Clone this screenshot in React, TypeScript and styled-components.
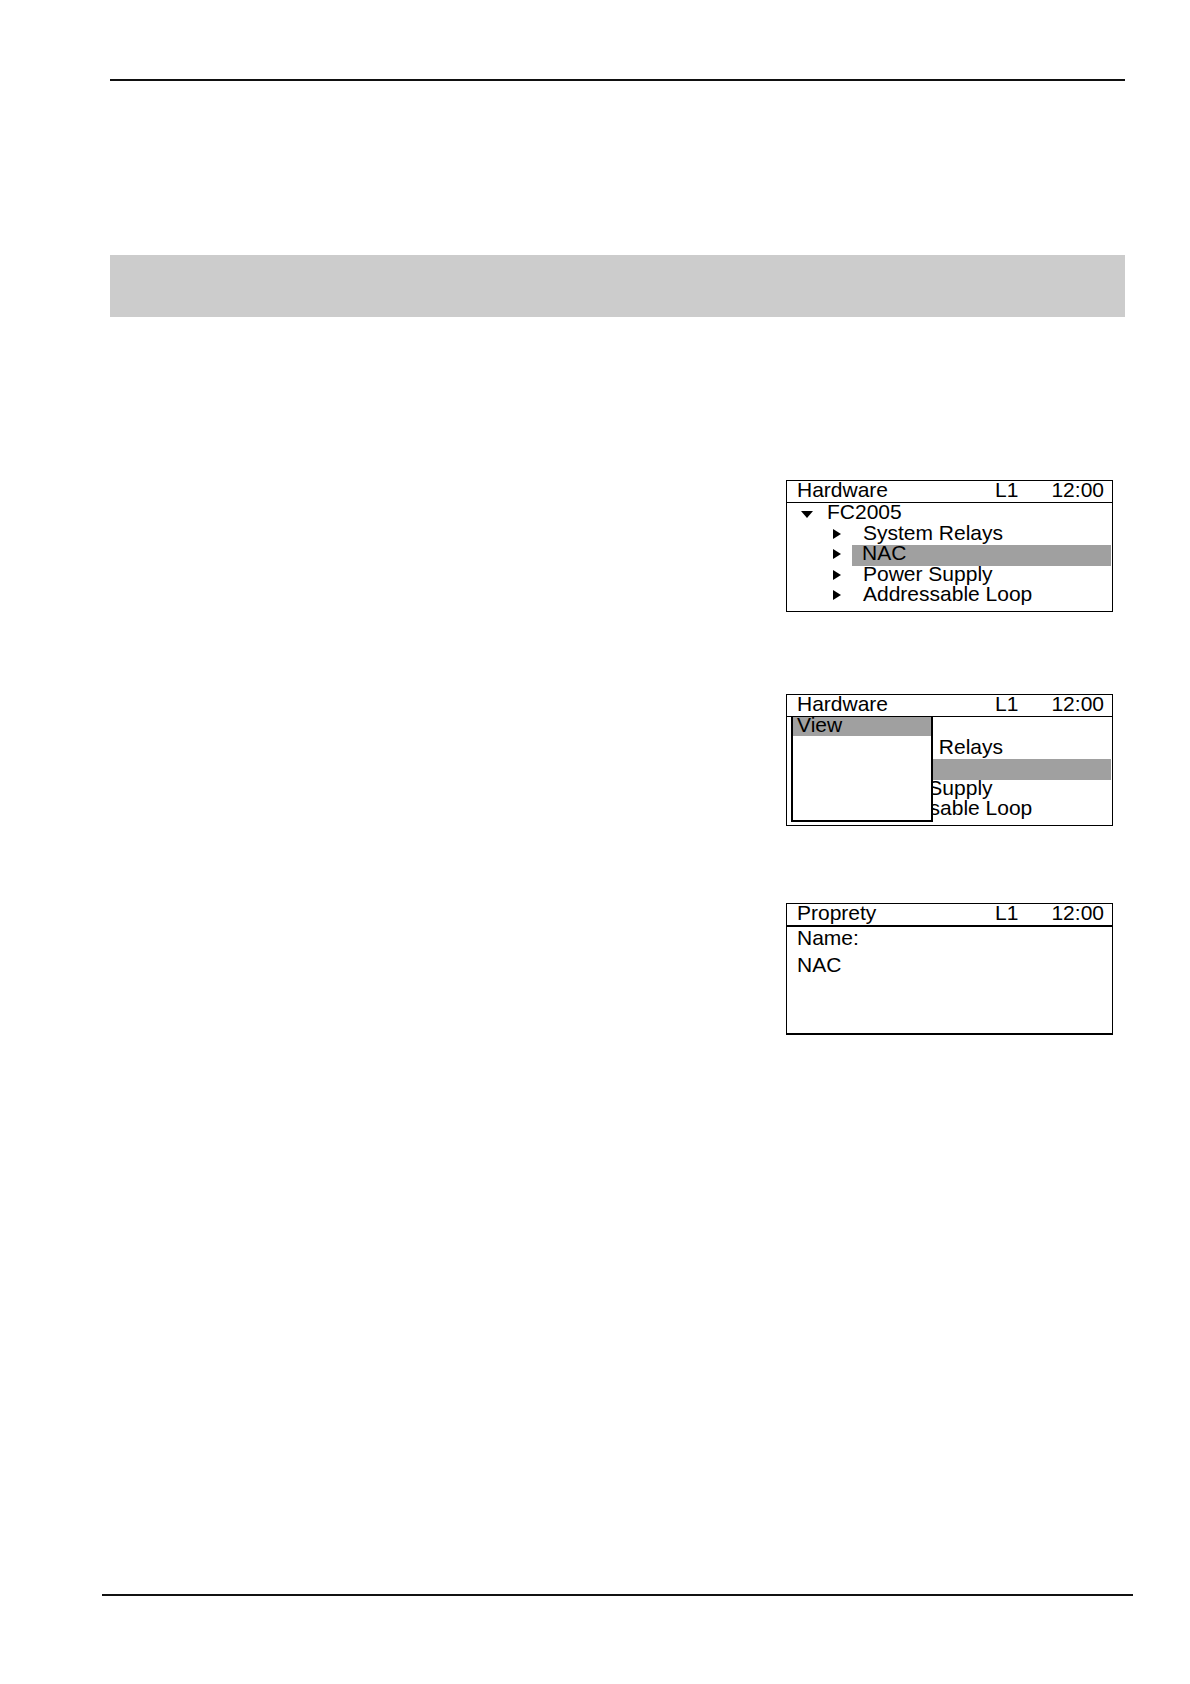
import styled, { createGlobalStyle } from 'styled-components';

// Panel geometry (px)
const SCREEN_WIDTH = 327;
const SCREEN_HEIGHT = 132;
const HIGHLIGHT = '#a0a0a0';

const GlobalStyle = createGlobalStyle`
  html, body {
    margin: 0;
    padding: 0;
    background: #fff;
  }
  body {
    font-family: "Liberation Sans", Arial, sans-serif;
    color: #000;
  }
`;

const Page = styled.div`
  width: 1190px;
  min-height: 1684px;
  display: flex;
  flex-direction: column;
  background: #fff;
`;

const Rule = styled.div<{ $top: number; $left: number; $width: number }>`
  flex: none;
  margin-top: ${p => p.$top}px;
  margin-left: ${p => p.$left}px;
  width: ${p => p.$width}px;
  height: 2px;
  background: #111;
`;

const Banner = styled.div`
  flex: none;
  margin-top: 174px;
  margin-left: 110px;
  width: 1015px;
  height: 62px;
  background: #cccccc;
`;

const ScreenStack = styled.div`
  display: flex;
  flex-direction: column;
  margin-top: 163px;
  margin-left: 786px;
`;

const Screen = styled.div<{ $before: number; $base?: number }>`
  position: relative;
  box-sizing: border-box;
  margin-top: ${p => p.$before}px;
  width: ${SCREEN_WIDTH}px;
  height: ${SCREEN_HEIGHT}px;
  border: 1px solid #000;
  border-bottom-width: ${p => p.$base ?? 1}px;
  font-size: 21px;
  background: #fff;
`;

const ScreenHeader = styled.div<{ $rule: number }>`
  display: flex;
  align-items: flex-start;
  height: 21px;
  padding: 0 8px 0 10px;
  border-bottom: ${p => p.$rule}px solid #000;
  line-height: 18px;
  white-space: nowrap;
`;

const HeaderTitle = styled.span`
  flex: 1;
`;

const HeaderLevel = styled.span`
  margin-right: 33px;
`;

const HeaderClock = styled.span``;

const TreeList = styled.div`
  padding-top: 1px;
`;

const TreeRow = styled.div<{ $indent: number; $hidden?: boolean }>`
  display: flex;
  align-items: flex-start;
  height: 20.5px;
  padding-left: ${p => p.$indent}px;
  line-height: 16px;
  white-space: nowrap;
  visibility: ${p => (p.$hidden ? 'hidden' : 'visible')};
`;

const Caret = styled.span<{ $open: boolean }>`
  flex: none;
  width: 0;
  height: 0;
  ${p =>
    p.$open
      ? `
    margin-top: 7px;
    margin-left: -1px;
    border-top: 7px solid #000;
    border-left: 6.5px solid transparent;
    border-right: 6.5px solid transparent;
  `
      : `
    margin-top: 4px;
    border-left: 8px solid #000;
    border-top: 5.5px solid transparent;
    border-bottom: 5.5px solid transparent;
  `}
`;

const TreeLabel = styled.span<{ $gap: number; $pad: number; $selected?: boolean }>`
  flex: 1;
  align-self: stretch;
  margin-left: ${p => p.$gap}px;
  margin-right: 1px;
  padding-left: ${p => p.$pad}px;
  background: ${p => (p.$selected ? HIGHLIGHT : 'transparent')};
`;

const PopupMenu = styled.div`
  position: absolute;
  top: 21px;
  left: 4px;
  box-sizing: border-box;
  width: 142px;
  height: 106px;
  border: 2px solid #000;
  border-top-width: 1px;
  background: #fff;
`;

const MenuItem = styled.div<{ $selected?: boolean }>`
  height: 19px;
  padding-left: 4px;
  line-height: 15px;
  background: ${p => (p.$selected ? HIGHLIGHT : 'transparent')};
`;

const FieldList = styled.div`
  padding-left: 10px;
`;

const FieldLine = styled.div`
  height: 27px;
  line-height: 22px;
`;

type TreeItem = { label: string; depth: 0 | 1; open?: boolean; selected?: boolean };

const TREE: TreeItem[] = [
  { label: 'FC2005', depth: 0, open: true },
  { label: 'System Relays', depth: 1 },
  { label: 'NAC', depth: 1, selected: true },
  { label: 'Power Supply', depth: 1 },
  { label: 'Addressable Loop', depth: 1 },
];

const Header = ({ title, rule = 1 }: { title: string; rule?: number }) => (
  <ScreenHeader $rule={rule}>
    <HeaderTitle>{title}</HeaderTitle>
    <HeaderLevel>L1</HeaderLevel>
    <HeaderClock>12:00</HeaderClock>
  </ScreenHeader>
);

// `covered` hides the root row, which sits entirely under the popup menu
const HardwareTree = ({ covered = false }: { covered?: boolean }) => (
  <TreeList>
    {TREE.map(item =>
      item.depth === 0 ? (
        <TreeRow key={item.label} $indent={15} $hidden={covered}>
          <Caret $open />
          <TreeLabel $gap={14} $pad={0}>{item.label}</TreeLabel>
        </TreeRow>
      ) : (
        <TreeRow key={item.label} $indent={46}>
          <Caret $open={false} />
          <TreeLabel $gap={11} $pad={item.selected ? 10 : 11} $selected={item.selected}>
            {item.label}
          </TreeLabel>
        </TreeRow>
      )
    )}
  </TreeList>
);

const App = () => {
  return (
    <>
      <GlobalStyle />
      <Page>
        <Rule $top={79} $left={110} $width={1015} />
        <Banner />

        <ScreenStack>
          <Screen $before={0}>
            <Header title="Hardware" />
            <HardwareTree />
          </Screen>

          <Screen $before={82}>
            <Header title="Hardware" />
            <HardwareTree covered />
            <PopupMenu>
              <MenuItem $selected>View</MenuItem>
            </PopupMenu>
          </Screen>

          <Screen $before={77} $base={2}>
            <Header title="Proprety" rule={2} />
            <FieldList>
              <FieldLine>Name:</FieldLine>
              <FieldLine>NAC</FieldLine>
            </FieldList>
          </Screen>
        </ScreenStack>

        <Rule $top={559} $left={102} $width={1031} />
      </Page>
    </>
  );
};

export default App;
